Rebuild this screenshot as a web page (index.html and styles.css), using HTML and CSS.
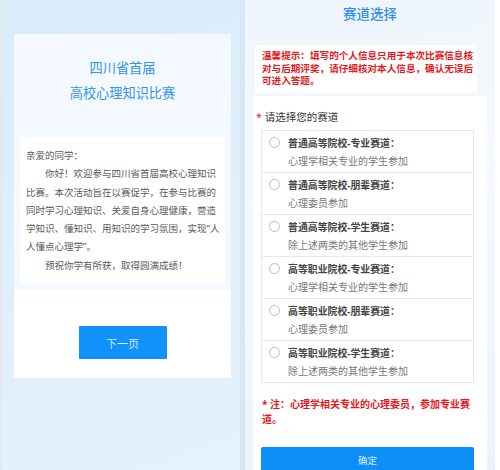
FILE: index.html
```html
<!DOCTYPE html>
<html lang="zh-CN">
<head>
    <meta charset="UTF-8">
    <meta name="viewport" content="width=device-width, initial-scale=1.0">
    <title>四川省首届高校心理知识比赛</title>
    <link rel="stylesheet" href="styles.css">
</head>
<body>
    <!-- 第一页：欢迎 -->
    <div class="page page-intro">
        <div class="intro-card">
            <div class="intro-head">
                <h1>四川省首届<br>高校心理知识比赛</h1>
                <div class="letter">
                    <p class="greet">亲爱的同学：</p>
                    <p class="indent">你好！欢迎参与四川省首届高校心理知识比赛。本次活动旨在以赛促学，在参与比赛的同时学习心理知识、关爱自身心理健康，营造学知识、懂知识、用知识的学习氛围，实现“人人懂点心理学”。</p>
                    <p class="indent">预祝你学有所获，取得圆满成绩！</p>
                </div>
            </div>
            <div class="intro-foot">
                <button class="btn-next">下一页</button>
            </div>
        </div>
    </div>

    <!-- 第二页：赛道选择 -->
    <div class="page page-track">
        <h2>赛道选择</h2>
        <div class="tip">温馨提示：填写的个人信息只用于本次比赛信息核对与后期评奖，请仔细核对本人信息，确认无误后可进入答题。</div>
        <div class="track-card">
            <div class="label"><span class="star">*</span>请选择您的赛道</div>
            <div class="options">
                <label class="option">
                    <span class="radio"></span>
                    <span class="opt-text">
                        <span class="opt-title">普通高等院校-专业赛道：</span>
                        <span class="opt-desc">心理学相关专业的学生参加</span>
                    </span>
                </label>
                <label class="option">
                    <span class="radio"></span>
                    <span class="opt-text">
                        <span class="opt-title">普通高等院校-朋辈赛道：</span>
                        <span class="opt-desc">心理委员参加</span>
                    </span>
                </label>
                <label class="option">
                    <span class="radio"></span>
                    <span class="opt-text">
                        <span class="opt-title">普通高等院校-学生赛道：</span>
                        <span class="opt-desc">除上述两类的其他学生参加</span>
                    </span>
                </label>
                <label class="option">
                    <span class="radio"></span>
                    <span class="opt-text">
                        <span class="opt-title">高等职业院校-专业赛道：</span>
                        <span class="opt-desc">心理学相关专业的学生参加</span>
                    </span>
                </label>
                <label class="option">
                    <span class="radio"></span>
                    <span class="opt-text">
                        <span class="opt-title">高等职业院校-朋辈赛道：</span>
                        <span class="opt-desc">心理委员参加</span>
                    </span>
                </label>
                <label class="option">
                    <span class="radio"></span>
                    <span class="opt-text">
                        <span class="opt-title">高等职业院校-学生赛道：</span>
                        <span class="opt-desc">除上述两类的其他学生参加</span>
                    </span>
                </label>
            </div>
            <p class="note">* 注：心理学相关专业的心理委员，参加专业赛道。</p>
            <button class="btn-ok">确定</button>
        </div>
    </div>
</body>
</html>
```

FILE: styles.css
```css
* {
    box-sizing: border-box;
}
body {
    margin: 0;
    width: 500px;
    height: 470px;
    overflow: hidden;
    display: flex;
    background: #fff;
    font-family: "Noto Sans", "Noto Sans CJK SC", sans-serif;
}
button {
    font-family: inherit;
    border: none;
    cursor: pointer;
}

/* 左侧页面 */
.page-intro {
    width: 245px;
    height: 470px;
    padding: 33px 11px 0 12px;
    background: linear-gradient(160deg, #d9ecfa 0%, #e0effb 55%, #e5f2fc 100%);
    border-top: 1px solid #e4e8ec;
    border-left: 2px solid #e4e8ec;
    border-right: 5px solid #d5e7f6;
}
.intro-card {
    width: 217px;
}
.intro-head {
    background: #f3f9fe;
    padding: 22px 6px 7px;
}
.intro-head h1 {
    margin: 0 0 31px;
    text-align: center;
    font-size: 13.2px;
    font-weight: normal;
    line-height: 25px;
    color: #3194ef;
}
.letter {
    background: #fff;
    padding: 10px 4px 8px 6px;
}
.letter p {
    margin: 0;
    font-size: 9.5px;
    line-height: 18.3px;
    color: #5a5a5a;
}
.letter .indent {
    text-indent: 2em;
}
.intro-foot {
    background: #fff;
    padding: 36px 0 19px;
    display: flex;
    justify-content: center;
}
.btn-next {
    width: 88px;
    height: 33px;
    background: #1192fb;
    color: #d6ecff;
    font-size: 11px;
    border-radius: 1px;
}

/* 右侧页面 */
.page-track {
    width: 250px;
    height: 470px;
    padding: 0 8px;
    background: linear-gradient(170deg, #eef5fc 0%, #f4f9fe 40%, #eaf3fc 100%);
}
.page-track h2 {
    margin: 0;
    text-align: center;
    font-size: 13.5px;
    font-weight: 500;
    line-height: 28px;
    color: #2e8df0;
}
.tip {
    margin: 17px 10px 0 2px;
    background: #fff;
    padding: 5px 0 5px 7px;
    font-size: 9.6px;
    line-height: 12.5px;
    font-weight: bold;
    color: #e5191c;
}
.track-card {
    margin-top: 3px;
    background: #fff;
    padding: 14px 13px 0 8px;
    height: 380px;
}
.label {
    font-size: 10.5px;
    line-height: 14px;
    color: #333;
}
.star {
    color: #e5191c;
    margin: 0 3px 0 -5px;
}
.options {
    margin-top: 6px;
    border: 1px solid #e9e9e9;
    border-bottom: none;
}
.option {
    display: flex;
    height: 42px;
    padding: 5px 0 0 7px;
    border-bottom: 1px solid #e9e9e9;
}
.radio {
    width: 11px;
    height: 11px;
    margin-top: 1.5px;
    border: 1px solid #bdbdbd;
    border-radius: 50%;
    background: #fff;
}
.opt-text {
    margin-left: 8px;
    display: flex;
    flex-direction: column;
}
.opt-title {
    font-size: 9.9px;
    line-height: 14px;
    font-weight: bold;
    color: #444;
}
.opt-desc {
    margin-top: 4px;
    font-size: 10px;
    line-height: 14px;
    color: #777;
}
.note {
    margin: 14px 0 0;
    padding-left: 1px;
    font-size: 10px;
    line-height: 15px;
    font-weight: bold;
    color: #e5191c;
}
.btn-ok {
    margin-top: 20px;
    width: 213px;
    height: 26px;
    background: #0d8ff8;
    color: #d6ecff;
    font-size: 9.5px;
    border-radius: 2px;
}
```
